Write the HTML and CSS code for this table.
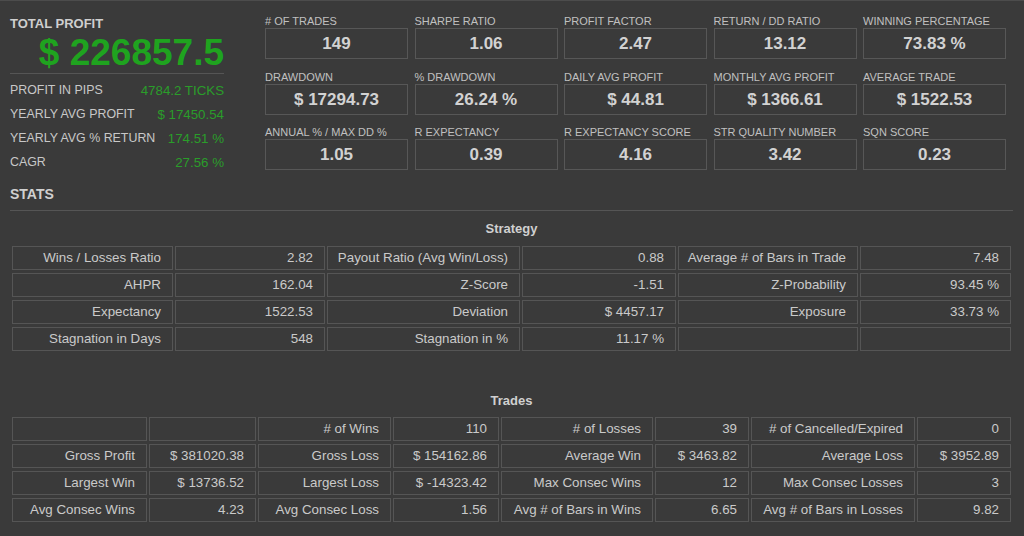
FILE: index.html
```html
<!DOCTYPE html>
<html>
<head>
<meta charset="utf-8">
<link rel="stylesheet" href="styles.css">
</head>
<body>
<div class="page">
  <div class="top">
    <div class="summary">
      <div class="sum-title">TOTAL PROFIT</div>
      <div class="sum-big">$ 226857.5</div>
      <div class="sum-row"><span>PROFIT IN PIPS</span><span class="green">4784.2 TICKS</span></div>
      <div class="sum-row"><span>YEARLY AVG PROFIT</span><span class="green">$ 17450.54</span></div>
      <div class="sum-row"><span>YEARLY AVG % RETURN</span><span class="green">174.51 %</span></div>
      <div class="sum-row"><span>CAGR</span><span class="green">27.56 %</span></div>
    </div>
    <div class="metrics">
      <div class="metric"><div class="m-label"># OF TRADES</div><div class="m-box">149</div></div>
      <div class="metric"><div class="m-label">SHARPE RATIO</div><div class="m-box">1.06</div></div>
      <div class="metric"><div class="m-label">PROFIT FACTOR</div><div class="m-box">2.47</div></div>
      <div class="metric"><div class="m-label">RETURN / DD RATIO</div><div class="m-box">13.12</div></div>
      <div class="metric"><div class="m-label">WINNING PERCENTAGE</div><div class="m-box">73.83 %</div></div>
      <div class="metric"><div class="m-label">DRAWDOWN</div><div class="m-box">$ 17294.73</div></div>
      <div class="metric"><div class="m-label">% DRAWDOWN</div><div class="m-box">26.24 %</div></div>
      <div class="metric"><div class="m-label">DAILY AVG PROFIT</div><div class="m-box">$ 44.81</div></div>
      <div class="metric"><div class="m-label">MONTHLY AVG PROFIT</div><div class="m-box">$ 1366.61</div></div>
      <div class="metric"><div class="m-label">AVERAGE TRADE</div><div class="m-box">$ 1522.53</div></div>
      <div class="metric"><div class="m-label">ANNUAL % / MAX DD %</div><div class="m-box">1.05</div></div>
      <div class="metric"><div class="m-label">R EXPECTANCY</div><div class="m-box">0.39</div></div>
      <div class="metric"><div class="m-label">R EXPECTANCY SCORE</div><div class="m-box">4.16</div></div>
      <div class="metric"><div class="m-label">STR QUALITY NUMBER</div><div class="m-box">3.42</div></div>
      <div class="metric"><div class="m-label">SQN SCORE</div><div class="m-box">0.23</div></div>
    </div>
  </div>

  <div class="stats-head">STATS</div>

  <div class="tbl-title">Strategy</div>
  <table class="grid strategy">
    <tr>
      <td class="s1">Wins / Losses Ratio</td><td class="s2">2.82</td>
      <td class="s3">Payout Ratio (Avg Win/Loss)</td><td class="s4">0.88</td>
      <td class="s5">Average # of Bars in Trade</td><td class="s6">7.48</td>
    </tr>
    <tr>
      <td>AHPR</td><td>162.04</td>
      <td>Z-Score</td><td>-1.51</td>
      <td>Z-Probability</td><td>93.45 %</td>
    </tr>
    <tr>
      <td>Expectancy</td><td>1522.53</td>
      <td>Deviation</td><td>$ 4457.17</td>
      <td>Exposure</td><td>33.73 %</td>
    </tr>
    <tr>
      <td>Stagnation in Days</td><td>548</td>
      <td>Stagnation in %</td><td>11.17 %</td>
      <td></td><td></td>
    </tr>
  </table>

  <div class="tbl-title trades-title">Trades</div>
  <table class="grid trades">
    <tr>
      <td class="t1"></td><td class="t2"></td>
      <td class="t3"># of Wins</td><td class="t4">110</td>
      <td class="t5"># of Losses</td><td class="t6">39</td>
      <td class="t7"># of Cancelled/Expired</td><td class="t8">0</td>
    </tr>
    <tr>
      <td>Gross Profit</td><td>$ 381020.38</td>
      <td>Gross Loss</td><td>$ 154162.86</td>
      <td>Average Win</td><td>$ 3463.82</td>
      <td>Average Loss</td><td>$ 3952.89</td>
    </tr>
    <tr>
      <td>Largest Win</td><td>$ 13736.52</td>
      <td>Largest Loss</td><td>$ -14323.42</td>
      <td>Max Consec Wins</td><td>12</td>
      <td>Max Consec Losses</td><td>3</td>
    </tr>
    <tr>
      <td>Avg Consec Wins</td><td>4.23</td>
      <td>Avg Consec Loss</td><td>1.56</td>
      <td>Avg # of Bars in Wins</td><td>6.65</td>
      <td>Avg # of Bars in Losses</td><td>9.82</td>
    </tr>
  </table>
</div>
</body>
</html>
```

FILE: styles.css
```css
html, body {
  margin: 0;
  padding: 0;
  background: #3a3a3a;
}
body {
  font-family: "Liberation Sans", Arial, sans-serif;
  color: #c8c8c8;
  width: 1024px;
  height: 536px;
  overflow: hidden;
}
.page {
  border-top: 1px solid #4c4c4c;
  padding: 13px 11px 0 10px;
}
.top {
  display: flex;
  align-items: flex-start;
  height: 171px;
}
.summary {
  width: 214px;
}
.sum-title {
  margin-top: 1.5px;
  font-size: 13px;
  line-height: 15px;
  font-weight: bold;
  color: #cfcfcf;
}
.sum-big {
  margin-top: 2.3px;
  font-size: 37px;
  line-height: 40px;
  font-weight: bold;
  color: #1fa31f;
  text-align: right;
  border-bottom: 1px solid #555;
}
.sum-row {
  display: flex;
  justify-content: space-between;
  font-size: 13px;
  line-height: 23.75px;
  color: #c8c8c8;
}
.sum-row span:first-child {
  font-size: 12.4px;
}
.sum-big + .sum-row { margin-top: 5.6px; }
.green {
  color: #2a9d2a;
  font-size: 13.3px;
}
.metrics {
  margin-left: 41px;
  display: grid;
  grid-template-columns: repeat(5, 143px);
  column-gap: 6.5px;
  row-gap: 10.5px;
}
.m-label {
  font-size: 11px;
  line-height: 14px;
  color: #c0c0c0;
  white-space: nowrap;
}
.m-box {
  box-sizing: border-box;
  height: 31px;
  border: 1px solid #575757;
  font-size: 17px;
  line-height: 29px;
  font-weight: bold;
  text-align: center;
  color: #d2d2d2;
}
.stats-head {
  margin-top: 1px;
  font-size: 14px;
  line-height: 16px;
  font-weight: bold;
  color: #d0d0d0;
  padding-bottom: 8px;
  border-bottom: 1px solid #555;
}
.tbl-title {
  margin-top: 9.5px;
  font-size: 13px;
  line-height: 16px;
  font-weight: bold;
  text-align: center;
  color: #d0d0d0;
}
.trades-title {
  margin-top: 39px;
}
.grid {
  margin-top: 6.5px;
  border-collapse: separate;
  border-spacing: 2px 3px;
  table-layout: fixed;
  width: 1003px;
}
.trades {
  margin-top: 4.5px;
}
.grid td {
  box-sizing: border-box;
  border: 1px solid #555;
  padding: 4px 11px 4px 4px;
  font-size: 13.33px;
  line-height: 14px;
  height: 24px;
  text-align: right;
  color: #cacaca;
  white-space: nowrap;
  overflow: hidden;
}
.s1 { width: 161px; }
.s2 { width: 150px; }
.s3 { width: 193px; }
.s4 { width: 154px; }
.s5 { width: 180px; }
.s6 { width: 151px; }
.t1 { width: 135px; }
.t2 { width: 107px; }
.t3 { width: 133px; }
.t4 { width: 106px; }
.t5 { width: 152px; }
.t6 { width: 94px; }
.t7 { width: 164px; }
.t8 { width: 94px; }
```
